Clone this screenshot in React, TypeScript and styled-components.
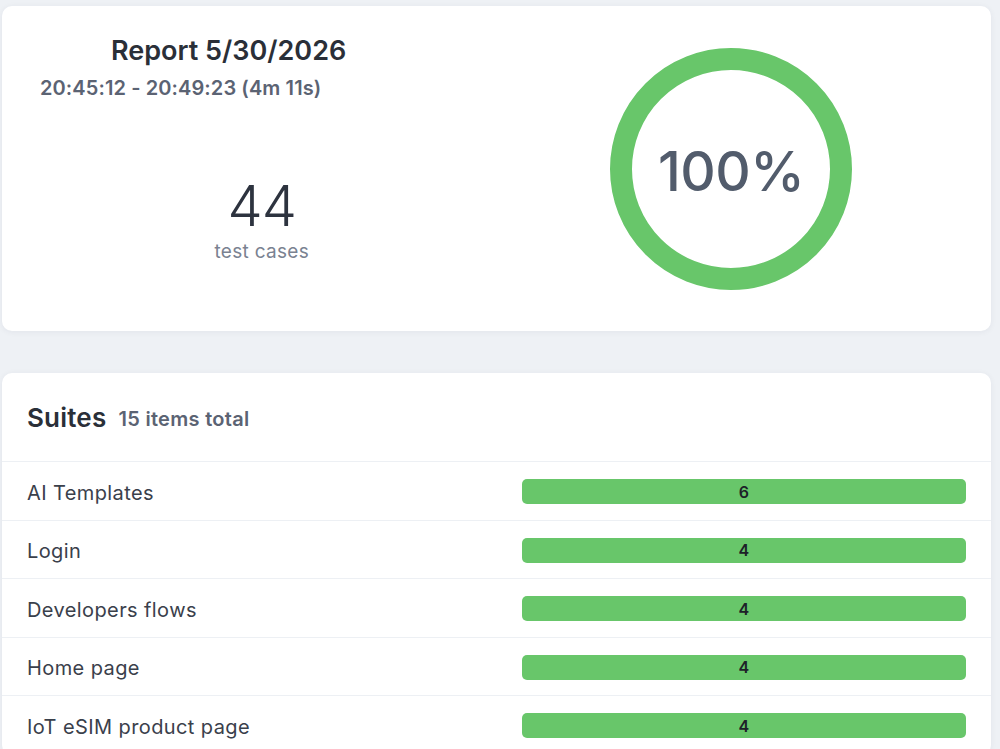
import React from "react";
import styled, { createGlobalStyle } from "styled-components";

const Global = createGlobalStyle`
  html, body { margin: 0; padding: 0; background: #eef1f5; }
  body { font-family: Inter, "Open Sans", sans-serif; color: #2d333d; }
`;

const Page = styled.div`
  display: flex;
  flex-direction: column;
  gap: 42px;
  padding: 6px 9px 0 2px;
`;

const Card = styled.section`
  background: #fff;
  border-radius: 10px;
  box-shadow: 0 1px 6px rgba(30, 40, 60, 0.06);
  overflow: hidden;
`;

const Summary = styled(Card)`
  height: 325px;
  display: grid;
  grid-template-columns: 1fr 1fr;
  padding: 0 25px;
  box-sizing: border-box;
`;

const LeftCol = styled.div`
  display: flex;
  flex-direction: column;
  padding-top: 28px;
`;

const Title = styled.h1`
  margin: 0 0 0 84px;
  font-size: 27px;
  font-weight: 600;
  color: #2a2f38;
  line-height: 34px;
  letter-spacing: 0;
`;

const Sub = styled.div`
  margin: 8px 0 0 13px;
  font-size: 20px;
  font-weight: 600;
  color: #5b6373;
  line-height: 24px;
  letter-spacing: 0.1px;
`;

const Count = styled.div`
  margin-top: 78px;
  display: flex;
  flex-direction: column;
  align-items: center;
`;

const CountNum = styled.div`
  font-size: 56px;
  font-weight: 300;
  line-height: 56px;
  color: #2d333f;
  letter-spacing: -1px;
`;

const CountLabel = styled.div`
  font-size: 19px;
  color: #7a8291;
  line-height: 24px;
  margin-top: 6px;
  letter-spacing: 0.3px;
`;

const RightCol = styled.div`
  display: flex;
  align-items: center;
  justify-content: center;
`;

const Ring = styled.div`
  position: relative;
  width: 242px;
  height: 242px;
  display: flex;
  align-items: center;
  justify-content: center;
`;

const RingSvg = styled.svg`
  position: absolute;
  inset: 0;
`;

const Percent = styled.div`
  position: relative;
  font-size: 55px;
  font-weight: 500;
  color: #525c6c;
  letter-spacing: -0.5px;
  margin-top: 4px;
`;

const SuitesHeader = styled.div`
  height: 89px;
  display: flex;
  align-items: center;
  gap: 12px;
  padding: 0 25px;
  border-bottom: 1px solid #edf0f4;
  box-sizing: border-box;
`;

const SuitesTitle = styled.h2`
  margin: 0;
  font-size: 26px;
  font-weight: 600;
  color: #2a2f38;
  letter-spacing: 0.2px;
`;

const SuitesCount = styled.span`
  font-size: 20px;
  font-weight: 600;
  color: #5b6373;
  margin-top: 3px;
  letter-spacing: 0.3px;
`;

const Row = styled.div`
  height: 58.5px;
  display: grid;
  grid-template-columns: 1fr 1fr;
  column-gap: 50px;
  align-items: center;
  padding: 0 25px;
  border-bottom: 1px solid #edf0f4;
  box-sizing: border-box;
`;

const RowName = styled.div`
  font-size: 20px;
  color: #3a404b;
  letter-spacing: 0.4px;
  margin-top: 4px;
`;

const Bar = styled.div`
  height: 25px;
  border-radius: 5px;
  background: #68c66a;
  display: flex;
  align-items: center;
  justify-content: center;
  font-size: 16px;
  font-weight: 600;
  color: #1d2128;
  margin-top: 2px;
`;

const suites = [
  { name: "AI Templates", count: 6 },
  { name: "Login", count: 4 },
  { name: "Developers flows", count: 4 },
  { name: "Home page", count: 4 },
  { name: "IoT eSIM product page", count: 4 },
];

export default function App() {
  return (
    <>
      <Global />
      <Page>
        <Summary>
          <LeftCol>
            <Title>Report 5/30/2026</Title>
            <Sub>20:45:12 - 20:49:23 (4m 11s)</Sub>
            <Count>
              <CountNum>44</CountNum>
              <CountLabel>test cases</CountLabel>
            </Count>
          </LeftCol>
          <RightCol>
            <Ring>
              <RingSvg width="242" height="242" viewBox="0 0 242 242">
                <circle cx="121" cy="121" r="110" fill="none" stroke="#68c66a" strokeWidth="22" />
              </RingSvg>
              <Percent>100%</Percent>
            </Ring>
          </RightCol>
        </Summary>
        <Card>
          <SuitesHeader>
            <SuitesTitle>Suites</SuitesTitle>
            <SuitesCount>15 items total</SuitesCount>
          </SuitesHeader>
          {suites.map((s) => (
            <Row key={s.name}>
              <RowName>{s.name}</RowName>
              <Bar>{s.count}</Bar>
            </Row>
          ))}
        </Card>
      </Page>
    </>
  );
}
